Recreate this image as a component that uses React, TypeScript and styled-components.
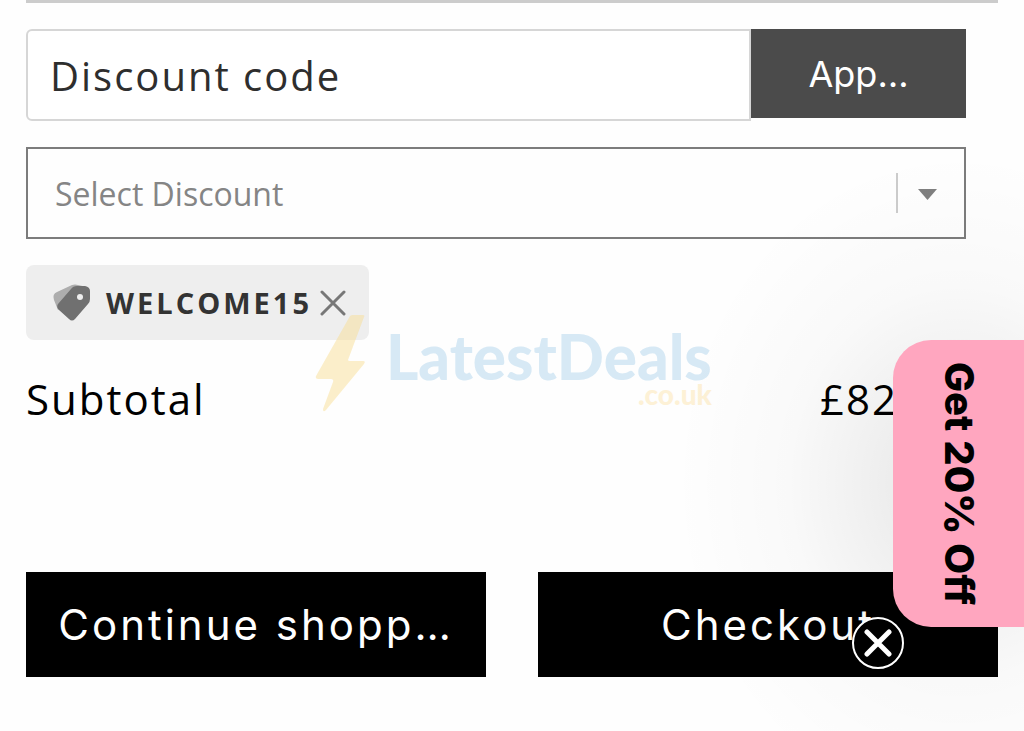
import React from "react";
import styled, { createGlobalStyle } from "styled-components";

const GlobalStyle = createGlobalStyle`
  *, *::before, *::after { box-sizing: border-box; }
  body {
    margin: 0;
    background: #fefefe;
    color: #000;
    font-family: "Open Sans", "Noto Sans", sans-serif;
  }
  button, input, select { font: inherit; margin: 0; }
`;

const Page = styled.main`
  position: relative;
  min-height: 100vh;
  padding: 0 26px 54px;
  overflow: hidden;
`;

const Rule = styled.hr`
  height: 3px;
  margin: 0 0 26px;
  border: 0;
  background: #ccc;
`;

const Discounts = styled.section`
  display: flex;
  flex-direction: column;
  align-items: flex-start;
  gap: 26px;
  padding-right: 32px;
`;

const CodeForm = styled.form`
  display: flex;
  align-items: flex-start;
  width: 100%;
`;

const CodeInput = styled.input`
  flex: 1;
  min-width: 0;
  height: 92px;
  padding: 0 22px;
  border: 2px solid #d6d6d6;
  border-radius: 6px 0 0 6px;
  background: #fff;
  color: #2e2e2e;
  font-size: 40px;
  letter-spacing: 2px;
  outline: 0;
  &::placeholder { color: #2e2e2e; opacity: 1; }
`;

const Button = styled.button<{ $tone?: string }>`
  border: 0;
  padding: 0 26px;
  background: ${(p) => p.$tone ?? "#000"};
  color: #fff;
  font-family: Inter, sans-serif;
  white-space: nowrap;
  cursor: pointer;
`;

const ApplyButton = styled(Button)`
  width: 215px;
  height: 89px;
  font-size: 36px;
`;

const ActionButton = styled(Button)`
  flex: 1;
  min-width: 0;
  height: 105px;
  font-size: 42px;
  letter-spacing: 3px;
`;

const SelectBox = styled.div`
  display: grid;
  align-items: center;
  width: 100%;
  height: 92px;
  border: 2px solid #7c7c7c;
  & > * { grid-area: 1 / 1; }
`;

const Select = styled.select`
  width: 100%;
  height: 100%;
  padding: 0 96px 0 27px;
  border: 0;
  appearance: none;
  background: transparent;
  color: #858585;
  font-size: 32px;
  outline: 0;
`;

const Indicator = styled.span`
  display: flex;
  align-items: center;
  justify-self: end;
  height: 40px;
  padding: 2px 27px 0 20px;
  border-left: 2px solid #ccc;
  pointer-events: none;
`;

const Tag = styled.div`
  display: flex;
  align-items: center;
  height: 75px;
  padding: 0 23px 0 26px;
  border-radius: 8px;
  background: #eee;
  color: #333;
  font-size: 29px;
  font-weight: 700;
  letter-spacing: 3px;
`;

const TagLabel = styled.span`
  margin: 0 8px 0 16px;
`;

const IconButton = styled.button`
  display: flex;
  padding: 0;
  border: 0;
  background: none;
  cursor: pointer;
`;

const Subtotal = styled.section`
  display: flex;
  justify-content: space-between;
  margin-top: 30px;
  padding-right: 100px;
  font-size: 42px;
  line-height: 58px;
  letter-spacing: 2px;
`;

const Actions = styled.div`
  display: flex;
  gap: 52px;
  margin-top: 144px;
`;

const Watermark = styled.div`
  position: absolute;
  top: 314px;
  left: 314px;
  display: flex;
  align-items: flex-start;
  gap: 20px;
  color: #d7e9f5;
  font-family: Lato, sans-serif;
  font-weight: 900;
  pointer-events: none;
`;

const WatermarkText = styled.div`
  display: flex;
  flex-direction: column;
  align-items: flex-end;
  padding-top: 10px;
  font-size: 62px;
  line-height: 64px;
`;

const WatermarkSuffix = styled.span`
  margin-top: -8px;
  color: #fdf1d6;
  font-size: 28px;
  line-height: 28px;
`;

const Offer = styled.aside`
  position: absolute;
  top: 340px;
  right: 0;
  &::before {
    content: "";
    position: absolute;
    inset: -190px -220px;
    background: radial-gradient(
      closest-side,
      rgba(0, 0, 0, 0.1),
      rgba(0, 0, 0, 0.06) 30%,
      rgba(0, 0, 0, 0.02) 60%,
      rgba(0, 0, 0, 0)
    );
    pointer-events: none;
  }
`;

const OfferTab = styled.button`
  position: relative;
  display: block;
  width: 131px;
  height: 287px;
  padding: 0;
  border: 0;
  border-radius: 38px 0 0 38px;
  background: #ffa6bf;
  color: #000;
  font-family: Inter, sans-serif;
  font-size: 40px;
  font-weight: 800;
  line-height: 50px;
  writing-mode: vertical-rl;
  white-space: nowrap;
  cursor: pointer;
`;

const OfferClose = styled.button`
  position: absolute;
  right: 120px;
  bottom: -42px;
  display: grid;
  place-items: center;
  width: 52px;
  height: 52px;
  padding: 0;
  border: 2px solid #fff;
  border-radius: 50%;
  background: #000;
  cursor: pointer;
`;

export default function App() {
  return (
    <>
      <GlobalStyle />
      <Page>
        <Rule />
        <Discounts>
          <CodeForm onSubmit={(e) => e.preventDefault()}>
            <CodeInput aria-label="Discount code" placeholder="Discount code" />
            <ApplyButton type="submit" $tone="#4b4b4b">App…</ApplyButton>
          </CodeForm>
          <SelectBox>
            <Select aria-label="Select Discount">
              <option>Select Discount</option>
            </Select>
            <Indicator>
              <svg width="19" height="11" viewBox="0 0 19 11" aria-hidden="true">
                <path d="M0 0h19L9.500 11z" fill="#808080" />
              </svg>
            </Indicator>
          </SelectBox>
          <Tag>
            <svg width="38" height="38" viewBox="0 0 38 38" aria-hidden="true">
              <path d="M2 16Q0 10 5 8L20 1Q23 0 26 1L35 3L6 26Z" fill="#adadad" />
              <path
                d="M19 5Q21 2 25 2H33Q38 3 38 7V15Q38 18 36 20L23 35Q20 38 17 35L7 26Q4 23 6 20Z"
                fill="#707070"
              />
              <circle cx="28" cy="13" r="3" fill="#eee" />
            </svg>
            <TagLabel>WELCOME15</TagLabel>
            <IconButton type="button" aria-label="Remove WELCOME15">
              <svg width="26" height="26" viewBox="0 0 26 26" aria-hidden="true">
                <path d="M2 2L24 24M24 2L2 24" stroke="#777" strokeWidth="3" strokeLinecap="round" />
              </svg>
            </IconButton>
          </Tag>
        </Discounts>
        <Subtotal>
          <span>Subtotal</span>
          <span>£82</span>
        </Subtotal>
        <Actions>
          <ActionButton type="button">Continue shopp…</ActionButton>
          <ActionButton type="button">Checkout</ActionButton>
        </Actions>
        <Watermark>
          <svg width="52" height="98" viewBox="0 0 52 98" aria-hidden="true">
            <path
              d="M36 2Q37 1 39 1H49Q51 1 50 3L34 46Q34 47 36 47H49Q52 47 50 50L12 96Q9 99 9 95L19 68Q20 65 17 65H4Q1 65 2 62Z"
              fill="#f9dc8c"
              fillOpacity="0.45"
            />
          </svg>
          <WatermarkText>
            <span>LatestDeals</span>
            <WatermarkSuffix>.co.uk</WatermarkSuffix>
          </WatermarkText>
        </Watermark>
        <Offer>
          <OfferTab type="button">Get 20% Off</OfferTab>
          <OfferClose type="button" aria-label="Close offer">
            <svg width="28" height="28" viewBox="0 0 28 28" aria-hidden="true">
              <path d="M3 3L25 25M25 3L3 25" stroke="#fff" strokeWidth="5" strokeLinecap="round" />
            </svg>
          </OfferClose>
        </Offer>
      </Page>
    </>
  );
}
